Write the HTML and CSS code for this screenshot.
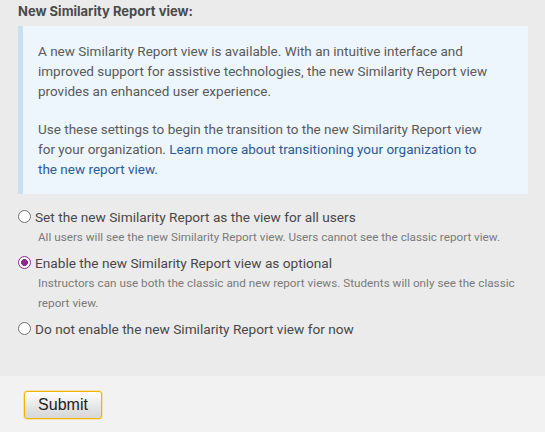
FILE: index.html
```html
<!DOCTYPE html>
<html>
<head>
<meta charset="utf-8">
<link rel="stylesheet" href="styles.css">
</head>
<body>
<form class="page">
  <section class="settings">
    <h3 class="title">New Similarity Report view:</h3>
    <div class="notice">
      <p>A new Similarity Report view is available. With an intuitive interface and improved support for assistive technologies, the new Similarity Report view provides an enhanced user experience.</p>
      <p>Use these settings to begin the transition to the new Similarity Report view for your organization. <a href="#" class="link">Learn more about transitioning your organization to the new report view.</a></p>
    </div>
    <div class="options">
      <div class="option">
        <label class="opt-label"><input type="radio" name="view" class="radio"><span>Set the new Similarity Report as the view for all users</span></label>
        <div class="opt-help">All users will see the new Similarity Report view. Users cannot see the classic report view.</div>
      </div>
      <div class="option">
        <label class="opt-label"><input type="radio" name="view" class="radio" checked><span>Enable the new Similarity Report view as optional</span></label>
        <div class="opt-help opt-help-wide">Instructors can use both the classic and new report views. Students will only see the classic report view.</div>
      </div>
      <div class="option">
        <label class="opt-label"><input type="radio" name="view" class="radio"><span>Do not enable the new Similarity Report view for now</span></label>
      </div>
    </div>
  </section>
  <div class="actions">
    <button type="button" class="submit">Submit</button>
  </div>
</form>
</body>
</html>
```

FILE: styles.css
```css
html, body {
  margin: 0;
  padding: 0;
  background: #f2f2f2;
}
body {
  font-family: Roboto, Inter, "Liberation Sans", sans-serif;
  font-size: 13.5px;
  color: #4a4a4a;
}
.page {
  display: flex;
  flex-direction: column;
  min-height: 432px;
}
.settings {
  background: #ebebeb;
  padding: 4px 17px 37px 18px;
}
.title {
  margin: 0;
  font-family: Inter, "Liberation Sans", sans-serif;
  font-size: 13px;
  line-height: 15px;
  font-weight: 700;
  color: #4a4a4a;
}
.notice {
  margin-top: 7px;
  background: #edf5fd;
  border-left: 5px solid #c8e0f0;
  padding: 15px 32px 15px 15px;
  color: #5a5a5a;
  line-height: 20px;
}
.notice p {
  margin: 0 0 18px 0;
}
.notice p:last-child {
  margin-bottom: 0;
}
.link {
  color: #2b5c98;
  text-decoration: none;
}
.options {
  margin-top: 13px;
  display: flex;
  flex-direction: column;
  gap: 6px;
}
.opt-label {
  display: flex;
  align-items: center;
  gap: 4px;
  line-height: 20px;
  font-size: 13.67px;
  color: #484848;
}
.radio {
  appearance: none;
  -webkit-appearance: none;
  margin: 0;
  width: 13px;
  height: 13px;
  border-radius: 50%;
  border: 1px solid #6f6f6f;
  background: #fff;
  box-sizing: border-box;
  flex: none;
  position: relative;
  top: -1px;
}
.radio:checked {
  border: 1.5px solid #8d2a90;
  background: radial-gradient(circle, #8d2a90 0 3.2px, #fff 3.7px);
}
.opt-help {
  padding-left: 20px;
  font-size: 11.7px;
  line-height: 20px;
  color: #7a7a7a;
}
.opt-help-wide {
  letter-spacing: 0.02px;
}
.actions {
  padding: 15px 24px;
  background: #f2f2f2;
  flex: 1;
}
.submit {
  font-family: "Liberation Sans", Arial, sans-serif;
  font-size: 16px;
  color: #222;
  width: 78px;
  height: 28px;
  padding: 0 0 1px;
  border: 1px solid #f0b400;
  border-radius: 3px;
  background: linear-gradient(#ffffff, #e4e4e4 60%, #d7d7d7);
  box-shadow: 0 0 0 0.5px #f7d36a;
}
```
